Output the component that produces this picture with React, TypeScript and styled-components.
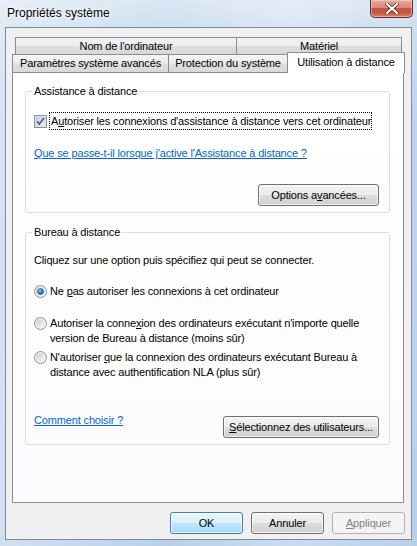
import React from "react";
import styled, { createGlobalStyle } from "styled-components";

const Global = createGlobalStyle`
  html, body { margin: 0; padding: 0; }
  body {
    width: 417px; height: 546px; overflow: hidden;
    font-family: "Liberation Sans", Arial, sans-serif;
    font-size: 11px;
    letter-spacing: -0.15px;
    color: #000;
  }
  #root { width: 417px; height: 546px; }
`;

const Window = styled.div`
  width: 417px;
  height: 546px;
  box-sizing: border-box;
  display: flex;
  flex-direction: column;
  background:
    linear-gradient(90deg, rgba(255,255,255,0.35) 0, rgba(255,255,255,0) 40%, rgba(255,255,255,0.25) 70%, rgba(255,255,255,0) 100%),
    linear-gradient(180deg, #dbe7f4 0, #cddff1 27px, #bed5ec 120px, #b9d0ea 100%);
`;

const TitleBar = styled.div`
  height: 27px;
  flex: none;
  display: flex;
  align-items: flex-start;
  justify-content: space-between;
`;

const Title = styled.div`
  padding: 6px 0 0 7px;
  font-size: 12px;
  letter-spacing: 0;
  line-height: 15px;
  color: #000;
  text-shadow: 0 0 6px #fff, 0 0 3px #fff;
`;

const CloseButton = styled.div`
  width: 43px;
  height: 18px;
  margin-right: 4px;
  box-sizing: border-box;
  border: 1px solid #6a2b25;
  border-top: none;
  border-radius: 0 0 5px 5px;
  background: linear-gradient(180deg, #e9a99d 0, #d98a7a 45%, #c4523c 50%, #c85d44 80%, #d98a70 100%);
  box-shadow: inset 0 0 0 1px rgba(255,255,255,0.35);
  display: flex;
  align-items: center;
  justify-content: center;
`;

const Client = styled.div`
  flex: 1;
  margin: 0 5px 6px 5px;
  border: 1px solid #7d8a98;
  background: #f0f0f0;
  padding: 9px 0 0 6px;
  display: flex;
  flex-direction: column;
`;

const TabStrip = styled.div`
  width: 392px;
  display: flex;
  flex-direction: column;
`;

const TabRow = styled.div<{ $indent: number }>`
  display: flex;
  padding-left: ${(p) => p.$indent}px;
  height: ${(p) => (p.$indent ? 17 : 18)}px;
  align-items: flex-end;
`;

const Tab = styled.div<{ $w: number; $active?: boolean }>`
  flex: none;
  width: ${(p) => p.$w}px;
  height: 100%;
  box-sizing: border-box;
  border: 1px solid #898c95;
  border-bottom: none;
  margin-left: -1px;
  &:first-child { margin-left: 0; }
  background: linear-gradient(180deg, #f4f4f4 0, #ececec 48%, #dedede 52%, #d9d9d9 100%);
  display: flex;
  align-items: center;
  justify-content: center;
  line-height: 15px;
  white-space: nowrap;
  ${(p) =>
    p.$active &&
    `
    height: 21px;
    margin: 0 -2px -1px -1px;
    background: #fff;
    position: relative;
    z-index: 2;
    align-items: flex-start;
    padding-top: 2px;
  `}
`;

const Panel = styled.div`
  width: 392px;
  height: 431px;
  box-sizing: border-box;
  border: 1px solid #898c95;
  background: linear-gradient(180deg, #ffffff 0, #fcfcfe 100%);
  padding: 10px 13px 0 12px;
  position: relative;
  z-index: 1;
`;

const Group = styled.fieldset<{ $gap?: number }>`
  margin: ${(p) => p.$gap || 0}px 0 0 0;
  min-inline-size: 0;
  border: 1px solid #d5dfe5;
  border-radius: 3px;
  padding: 13px 10px 6px 8px;
  display: flex;
  flex-direction: column;
  align-items: flex-start;
  white-space: nowrap;
`;

const Caption = styled.legend`
  padding: 0 2px;
  margin-left: -2px;
  line-height: 16px;
`;

const CheckRow = styled.label`
  display: flex;
  align-items: center;
  height: 18px;
`;

const FocusLabel = styled.span`
  margin-left: 2px;
  border: 1px dotted #000;
  padding: 0 0 0 1px;
  line-height: 16px;
`;

const Link = styled.a<{ $gap?: number }>`
  color: #0066cc;
  text-decoration: underline;
  line-height: 15px;
  margin-top: ${(p) => p.$gap || 0}px;
  cursor: pointer;
`;

const Text = styled.div<{ $gap?: number }>`
  line-height: 15px;
  margin-top: ${(p) => p.$gap || 0}px;
`;

const RadioRow = styled.label<{ $gap?: number }>`
  display: flex;
  align-items: flex-start;
  margin-top: ${(p) => p.$gap || 0}px;
  line-height: 15px;
`;

const RadioText = styled.span`
  margin-left: 3px;
`;

const IconBox = styled.span`
  flex: none;
  width: 13px;
  height: 13px;
  display: flex;
  margin-top: 1px;
`;

const Button = styled.button<{ $w: number; $variant?: "default" | "disabled" }>`
  width: ${(p) => p.$w}px;
  height: 22px;
  box-sizing: border-box;
  font-family: inherit;
  font-size: 11px;
  letter-spacing: -0.15px;
  white-space: nowrap;
  padding: 0;
  color: #000;
  border: 1px solid #707070;
  border-radius: 3px;
  background: linear-gradient(180deg, #f2f2f2 0, #ebebeb 48%, #dddddd 52%, #cfcfcf 100%);
  box-shadow: inset 0 0 0 1px rgba(255,255,255,0.7);
  ${(p) =>
    p.$variant === "default" &&
    `
    border-color: #3c7fb1;
    background: linear-gradient(180deg, #eaf6fd 0, #d9f0fc 48%, #bee6fd 52%, #a7d9f5 100%);
    box-shadow: inset 0 0 0 1px rgba(255,255,255,0.8);
  `}
  ${(p) =>
    p.$variant === "disabled" &&
    `
    border-color: #adb2b5;
    background: #f4f4f4;
    color: #838383;
    box-shadow: none;
  `}
`;

const RightAligned = styled.div<{ $gap: number }>`
  align-self: stretch;
  display: flex;
  justify-content: flex-end;
  margin-top: ${(p) => p.$gap}px;
`;

const Footer = styled.div`
  align-self: stretch;
  display: flex;
  justify-content: space-between;
  align-items: flex-start;
  margin-top: 33px;
  ${Button} { margin-top: 3px; }
`;

const DialogButtons = styled.div`
  width: 393px;
  display: flex;
  justify-content: flex-end;
  gap: 8px;
  margin-top: 9px;
`;

const U = styled.span`
  text-decoration: underline;
`;

const CheckBox = () => (
  <IconBox>
    <svg width="13" height="13" viewBox="0 0 13 13">
      <defs>
        <linearGradient id="cbg" x1="0" y1="0" x2="1" y2="1">
          <stop offset="0" stopColor="#cbcfd5" />
          <stop offset="1" stopColor="#f6f6f6" />
        </linearGradient>
      </defs>
      <rect x="0.5" y="0.5" width="12" height="12" fill="#f4f4f4" stroke="#8f8f8f" />
      <rect x="2" y="2" width="9" height="9" fill="url(#cbg)" stroke="#b8bcc4" strokeWidth="0.6" />
      <path d="M3 6.2 L5.3 9 L10 3" fill="none" stroke="#4b61a6" strokeWidth="1.8" />
    </svg>
  </IconBox>
);

const Radio = ({ checked }: { checked?: boolean }) => (
  <IconBox>
    <svg width="13" height="13" viewBox="0 0 13 13">
      <defs>
        <linearGradient id="rbg" x1="0" y1="0" x2="1" y2="1">
          <stop offset="0" stopColor="#c9ccd1" />
          <stop offset="1" stopColor="#f7f7f7" />
        </linearGradient>
        <radialGradient id="rdot" cx="0.4" cy="0.35" r="0.7">
          <stop offset="0" stopColor="#8ad6ff" />
          <stop offset="0.5" stopColor="#2b8fd6" />
          <stop offset="1" stopColor="#0d4f8b" />
        </radialGradient>
      </defs>
      <circle cx="6.5" cy="6.5" r="6" fill="#f4f4f4" stroke="#8f8f8f" />
      <circle cx="6.5" cy="6.5" r="4.5" fill="url(#rbg)" />
      {checked && <circle cx="6.5" cy="6.5" r="3" fill="url(#rdot)" stroke="#1c4f7f" strokeWidth="0.5" />}
    </svg>
  </IconBox>
);

export default function App() {
  return (
    <>
      <Global />
      <Window>
        <TitleBar>
          <Title>Propriétés système</Title>
          <CloseButton>
            <svg width="14" height="11" viewBox="0 0 14 11">
              <path d="M2 1 L12 10 M12 1 L2 10" stroke="#5a1e18" strokeWidth="3.6" strokeLinecap="round" />
              <path d="M2 1 L12 10 M12 1 L2 10" stroke="#fff" strokeWidth="2.2" strokeLinecap="round" />
            </svg>
          </CloseButton>
        </TitleBar>
        <Client>
          <TabStrip>
            <TabRow $indent={3}>
              <Tab $w={222}>Nom de l'ordinateur</Tab>
              <Tab $w={166}>Matériel</Tab>
            </TabRow>
            <TabRow $indent={0}>
              <Tab $w={157}>Paramètres système avancés</Tab>
              <Tab $w={120}>Protection du système</Tab>
              <Tab $w={118} $active>Utilisation à distance</Tab>
            </TabRow>
          </TabStrip>
          <Panel>
            <Group>
              <Caption>Assistance à distance</Caption>
              <CheckRow>
                <CheckBox />
                <FocusLabel>
                  A<U>u</U>toriser les connexions d'assistance à distance vers cet ordinateur
                </FocusLabel>
              </CheckRow>
              <Link $gap={16}>Que se passe-t-il lorsque j'active l'Assistance à distance ?</Link>
              <RightAligned $gap={23}>
                <Button $w={121}>
                  Options a<U>v</U>ancées...
                </Button>
              </RightAligned>
            </Group>
            <Group $gap={11}>
              <Caption>Bureau à distance</Caption>
              <Text>Cliquez sur une option puis spécifiez qui peut se connecter.</Text>
              <RadioRow $gap={16}>
                <Radio checked />
                <RadioText>
                  Ne <U>p</U>as autoriser les connexions à cet ordinateur
                </RadioText>
              </RadioRow>
              <RadioRow $gap={17}>
                <Radio />
                <RadioText>
                  Autoriser la conne<U>x</U>ion des ordinateurs exécutant n'importe quelle
                  <br />
                  version de Bureau à distance (moins sûr)
                </RadioText>
              </RadioRow>
              <RadioRow $gap={4}>
                <Radio />
                <RadioText>
                  N'autoriser <U>q</U>ue la connexion des ordinateurs exécutant Bureau à
                  <br />
                  distance avec authentification NLA (plus sûr)
                </RadioText>
              </RadioRow>
              <Footer>
                <Link>Comment choisir ?</Link>
                <Button $w={156}>
                  <U>S</U>électionnez des utilisateurs...
                </Button>
              </Footer>
            </Group>
          </Panel>
          <DialogButtons>
            <Button $w={73} $variant="default">OK</Button>
            <Button $w={73}>Annuler</Button>
            <Button $w={73} $variant="disabled">
              <U>A</U>ppliquer
            </Button>
          </DialogButtons>
        </Client>
      </Window>
    </>
  );
}
